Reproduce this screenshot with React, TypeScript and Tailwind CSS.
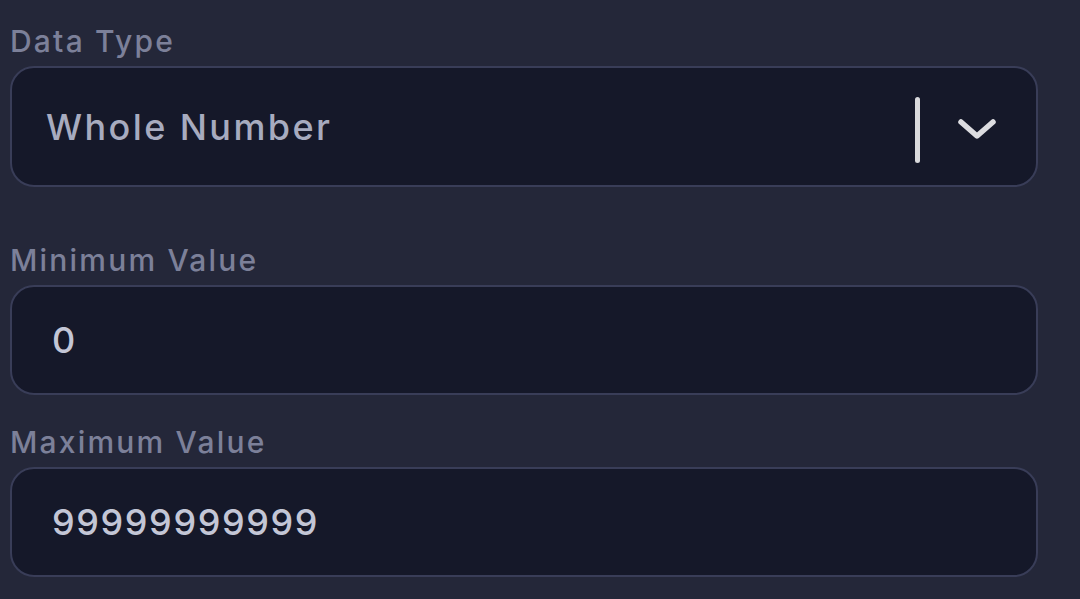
const font = { fontFamily: 'Inter, "Noto Sans", sans-serif' };

function Field({ label, value, select = false, gap }: { label: string; value: string; select?: boolean; gap: string }) {
  return (
    <div className={gap}>
      <div className="pl-[10px] text-[30px] leading-[38px] text-[#7c8099] tracking-[2.2px] font-medium">{label}</div>
      <div
        className={
          'mt-[6px] ml-[10px] w-[1028px] rounded-[24px] border-2 border-[#393d58] bg-[#151829] flex items-center ' +
          (select ? 'h-[121px] pl-[34px] pr-[38px]' : 'h-[110px] pl-[40px] pr-[38px]')
        }
      >
        <span className={select ? 'text-[36px] text-[#a7abbf] tracking-[2.4px] font-medium flex-1' : 'text-[36px] text-[#c3c6d6] tracking-[1.6px] font-medium flex-1'}>
          {value}
        </span>
        {select && (
          <div className="flex items-center">
            <div className="w-[5px] h-[66px] mt-[6px] rounded-full bg-[#d9d9dc]" />
            <svg className="ml-[36px] mt-[4px]" width="42" height="26" viewBox="0 0 42 26" fill="none">
              <polyline points="5,6 21,20 37,6" stroke="#dcdce0" strokeWidth="5.5" strokeLinecap="round" strokeLinejoin="round" />
            </svg>
          </div>
        )}
      </div>
    </div>
  );
}

export default function App() {
  return (
    <div className="w-[1080px] h-[599px] bg-[#242739] overflow-hidden pt-[22px]" style={font}>
      <Field label="Data Type" value="Whole Number" select gap="" />
      <Field label="Minimum Value" value="0" gap="mt-[54px]" />
      <Field label="Maximum Value" value="99999999999" gap="mt-[28px]" />
    </div>
  );
}
